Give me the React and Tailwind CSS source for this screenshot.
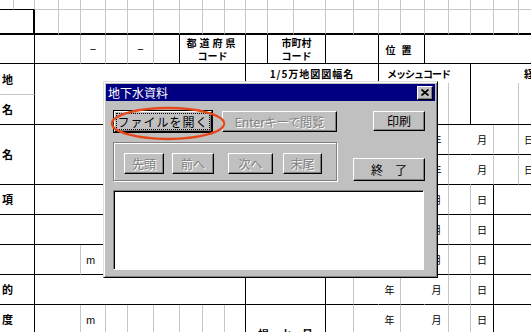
import { clsx } from 'clsx'
import { twMerge } from 'tailwind-merge'

const cn = (...a) => twMerge(clsx(a))

// one spreadsheet cell: draws its own right and bottom line
function Cell({ className, children }) {
  return (
    <div
      className={cn(
        'flex items-center justify-center overflow-hidden whitespace-nowrap border-r border-b border-[#c6c6c6] text-[10px] font-bold leading-[13px] text-black',
        className
      )}
    >
      {children}
    </div>
  )
}

// row titles sit in a column scrolled off to the left, only the last glyph shows
const label = 'col-span-2 justify-end pr-[17px] tracking-[4px] border-r-black border-b-black text-[11px]'
const day = 'font-normal text-[10px]'

// 年 ? 月 ? 日 in the upper date rows
function DatesTop() {
  return (
    <>
      <Cell className={cn('border-b-black', day)}>年</Cell>
      <Cell className="border-r-transparent border-b-black" />
      <Cell className={cn('border-b-black', day)}>月</Cell>
      <Cell className="border-b-black" />
      <Cell className={cn('border-r-transparent border-b-black justify-start pl-[5px]', day)}>日</Cell>
    </>
  )
}

function DatesMid() {
  return (
    <>
      <Cell className={cn('border-b-black', day)}>月</Cell>
      <Cell className="border-b-black" />
      <Cell className={cn('border-r-black border-b-black', day)}>日</Cell>
      <Cell className="col-span-2 border-r-transparent border-b-black" />
    </>
  )
}

function DatesLow() {
  return (
    <>
      <Cell className="border-b-black" />
      <Cell className="border-r-transparent border-b-black" />
      <Cell className={cn('border-b-black', day)}>年</Cell>
      <Cell className="border-r-transparent border-b-black" />
      <Cell className={cn('border-b-black', day)}>月</Cell>
      <Cell className="border-b-black" />
      <Cell className={cn('border-r-black border-b-black', day)}>日</Cell>
      <Cell className="col-span-2 border-r-transparent border-b-black" />
    </>
  )
}

function Sheet() {
  return (
    <div className="grid w-max grid-cols-[14px_21px_24px_22px_25px_22px_26px_26px_23px_22px_21px_22px_26px_32px_28px_25px_22px_24px_24px_22px_23px_25px_25px] grid-rows-[10px_25px_29px_31px_30px_30px_30px_30px_30px_30px_30px_30px_30px]">
      {/* plain gridline rows */}
      {Array.from({ length: 23 }, (_, i) => (
        <Cell key={'a' + i} className={i < 2 ? 'border-b-black' : ''} />
      ))}
      <Cell className="col-span-2 border-r-2 border-b-2 border-r-black border-b-black" />
      {Array.from({ length: 21 }, (_, i) => (
        <Cell key={'b' + i} className="border-b-2 border-b-black" />
      ))}

      {/* code row */}
      <Cell className="col-span-2 border-r-black border-b-black" />
      <Cell className="col-span-2 border-b-black" />
      <Cell className="border-b-black font-normal text-[11px] font-['Liberation_Sans',sans-serif]">−</Cell>
      <Cell className="border-b-black" />
      <Cell className="border-b-black font-normal text-[11px] font-['Liberation_Sans',sans-serif]">−</Cell>
      <Cell className="border-r-black border-b-black" />
      <Cell className="col-span-3 flex-col border-r-black border-b-black">
        <span className="tracking-[3px]">都道府県</span>
        <span>コード</span>
      </Cell>
      <Cell className="border-r-black border-b-black" />
      <Cell className="col-span-2 flex-col border-r-black border-b-black">
        <span>市町村</span>
        <span>コード</span>
      </Cell>
      <Cell className="col-span-2 border-r-black border-b-black" />
      <Cell className="col-span-2 border-r-black border-b-black tracking-[6px]">位置</Cell>
      <Cell className="col-span-5 border-r-transparent border-b-black" />

      {/* location rows */}
      <Cell className={cn(label, 'border-b-[#c6c6c6]')}>所在地</Cell>
      <Cell className="col-span-9 row-span-2 border-r-black border-b-black" />
      <Cell className="col-span-5 row-span-2 flex-col items-stretch justify-start border-r-black border-b-black">
        <div className="flex h-[19px] items-center justify-center tracking-[1px]">1/5万地図図幅名</div>
      </Cell>
      <Cell className="col-span-4 row-span-2 flex-col items-stretch justify-start border-r-black border-b-black">
        <div className="flex h-[19px] items-center pl-[8px] tracking-[-1px]">メッシュコード</div>
        <div className="flex flex-1">
          <div className="w-[70px] border-r border-[#c6c6c6]" />
        </div>
      </Cell>
      <Cell className="col-span-3 row-span-2 flex-col items-stretch justify-start border-r-transparent border-b-black">
        <div className="flex h-[19px] items-center pl-[53px]">経緯度</div>
        <div className="flex flex-1">
          <div className="w-[48px] border-r border-[#c6c6c6]" />
        </div>
      </Cell>
      <Cell className={label}>所有者名</Cell>

      {/* name rows */}
      <Cell className={cn(label, 'row-span-2')}>施設名</Cell>
      <Cell className="col-span-9 row-span-2 border-r-black border-b-black" />
      <Cell className="col-span-7 row-span-2 border-r-black border-b-black" />
      <DatesTop />
      <DatesTop />

      <Cell className={label}>事項</Cell>
      <Cell className="col-span-16 border-r-black border-b-black" />
      <DatesMid />

      <Cell className={label} />
      <Cell className="col-span-16 border-r-black border-b-black" />
      <DatesMid />

      <Cell className={label} />
      <Cell className="col-span-2 border-b-black" />
      <Cell className="justify-start border-b-black pl-[5px] font-normal">m</Cell>
      <Cell className="col-span-13 border-r-black border-b-black" />
      <DatesMid />

      <Cell className={label}>目的</Cell>
      <Cell className="col-span-9 border-r-black border-b-black" />
      <Cell className="col-span-3 border-r-black border-b-black" />
      <DatesLow />

      <Cell className={label}>深度</Cell>
      <Cell className="col-span-2 border-b-black" />
      <Cell className="justify-start border-b-black pl-[5px] font-normal">m</Cell>
      <Cell className="border-b-black" />
      <Cell className="border-b-black" />
      <Cell className="border-b-black" />
      <Cell className="border-b-black" />
      <Cell className="border-b-black" />
      <Cell className="border-r-black border-b-black" />
      <Cell className="col-span-3 row-span-2 border-r-black border-b-black text-[11px]">揚　水　量</Cell>
      <DatesLow />
    </div>
  )
}

// classic raised button face
function Bevel({ className, disabled, children }) {
  return (
    <div
      className={cn(
        'flex items-center justify-center border border-t-white border-l-white border-r-black border-b-black bg-[#c0c0c0] text-[12px] leading-none text-black shadow-[inset_-1px_-1px_0_#808080]',
        disabled && 'text-[#808080] [text-shadow:1px_1px_0_#ffffff]',
        className
      )}
    >
      {children}
    </div>
  )
}

function Dialog() {
  return (
    <div className="absolute left-[103px] top-[81px] flex h-[197px] w-[335px] flex-col border border-t-[#dfdfdf] border-l-[#dfdfdf] border-r-black border-b-black bg-[#c0c0c0] shadow-[inset_1px_1px_0_#ffffff,inset_-1px_-1px_0_#808080]">
      <div className="mx-[2px] mt-[2px] flex h-[17px] items-center justify-between bg-[#000080] pl-[2px] pr-[2px]">
        <span className="text-[12px] leading-none text-white">地下水資料</span>
        <Bevel className="h-[14px] w-[16px]">
          <svg width="8" height="7" viewBox="0 0 8 7">
            <path d="M0.5 0.5 L7.5 6.5 M7.5 0.5 L0.5 6.5" stroke="#000" strokeWidth="1.7" fill="none" />
          </svg>
        </Bevel>
      </div>

      <div className="mt-[9px] flex items-start pl-[9px]">
        <div className="h-[23px] w-[100px] border border-black">
          <Bevel className="h-full w-full p-[1px]">
            <span className="flex h-full w-full items-center justify-center border border-dotted border-black tracking-[1px]">
              ファイルを開く
            </span>
          </Bevel>
        </div>
        <Bevel disabled className="ml-[9px] mt-[1px] h-[21px] w-[115px]">
          Enterキーで閲覧
        </Bevel>
        <Bevel className="ml-[36px] mt-[1px] h-[20px] w-[52px]">印刷</Bevel>
      </div>

      <div className="mt-[9px] flex items-start pl-[9px]">
        <div className="flex h-[39px] w-[224px] items-start border border-[#808080] pl-[10px] pt-[10px] shadow-[inset_1px_1px_0_#ffffff,1px_1px_0_#ffffff]">
          <Bevel disabled className="h-[21px] w-[40px]">先頭</Bevel>
          <Bevel disabled className="ml-[8px] h-[21px] w-[42px]">前へ</Bevel>
          <Bevel disabled className="ml-[14px] h-[21px] w-[45px]">次へ</Bevel>
          <Bevel disabled className="ml-[10px] h-[21px] w-[39px]">末尾</Bevel>
        </div>
        <Bevel className="ml-[16px] mt-[16px] h-[23px] w-[72px]">終　了</Bevel>
      </div>

      <div className="ml-[9px] mt-[9px] h-[80px] w-[311px] border border-t-[#808080] border-l-[#808080] border-r-white border-b-white bg-white shadow-[inset_1px_1px_0_#000000]" />
    </div>
  )
}

export default function App() {
  return (
    <div className="relative h-[332px] w-[531px] overflow-hidden bg-white font-['Noto_Sans_CJK_JP',sans-serif]">
      <Sheet />
      <Dialog />
      {/* hand-drawn highlight round the open button */}
      <svg className="absolute left-[109px] top-[106px]" width="118" height="36" viewBox="0 0 118 36">
        <ellipse cx="59" cy="17.5" rx="56" ry="15.5" fill="none" stroke="#e4481b" strokeWidth="2.4" />
      </svg>
    </div>
  )
}
